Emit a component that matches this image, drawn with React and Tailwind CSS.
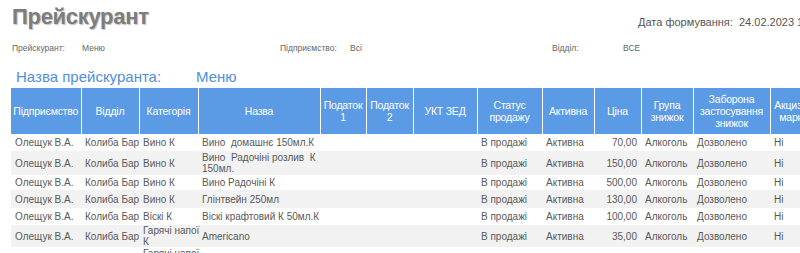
import React from 'react';

const columns = [
  { title: 'Підприємство', width: 70 },
  { title: 'Відділ', width: 58 },
  { title: 'Категорія', width: 59 },
  { title: 'Назва', width: 122 },
  { title: 'Податок\n1', width: 46 },
  { title: 'Податок\n2', width: 47 },
  { title: 'УКТ ЗЕД', width: 64 },
  { title: 'Статус\nпродажу', width: 65 },
  { title: 'Активна', width: 52 },
  { title: 'Ціна', width: 47 },
  { title: 'Група\nзнижок', width: 52 },
  { title: 'Заборона\nзастосування\nзнижок', width: 77 },
  { title: 'Акцизна\nмарка', width: 47 },
];

const rows = [
  { h: 'h-[17px]', name: 'Вино  домашнє 150мл.К', cat: 'Вино К', price: '70,00' },
  { h: 'h-[24px]', name: 'Вино  Радочіні розлив  К\n150мл.', cat: 'Вино К', price: '150,00' },
  { h: 'h-[15px]', name: 'Вино Радочіні К', cat: 'Вино К', price: '500,00' },
  { h: 'h-[18px]', name: 'Глінтвейн 250мл', cat: 'Вино К', price: '130,00' },
  { h: 'h-[17px]', name: 'Віскі крафтовий К 50мл.К', cat: 'Віскі К', price: '100,00' },
  { h: 'h-[21px]', name: 'Americano', cat: 'Гарячі напої\nК', price: '35,00' },
  { h: 'h-[34px]', name: 'Espresso', cat: 'Гарячі напої\nК', price: '35,00', catTop: true },
];

const Cell = ({ children, className = 'align-middle' }) => (
  <td className={`px-[4px] py-0 whitespace-pre leading-[11px] ${className}`}>
    {children}
  </td>
);

const App = () => {
  return (
    <div className="h-[253px] w-[800px] overflow-hidden bg-white font-['Liberation_Sans',Arial,sans-serif]">
      {/* title + date */}
      <div className="flex items-start pl-3 pt-[4px]">
        <h1 className="w-[626px] shrink-0 text-[22px] font-bold leading-[26px] tracking-[-0.3px] text-[#7d7d7d] [text-shadow:1px_1px_1px_rgba(0,0,0,0.25)]">
          Прейскурант
        </h1>
        <div className="mt-[12px] shrink-0 whitespace-pre text-[11px] leading-[13px] text-[#555]">
          Дата формування:  24.02.2023 16:42
        </div>
      </div>

      {/* filters */}
      <div className="mt-[12px] flex pl-3 text-[8.5px] leading-[12px] text-[#666]">
        <span className="w-[70px]">Прейскурант:</span>
        <span className="w-[198px]">Меню</span>
        <span className="w-[70px]">Підприємство:</span>
        <span className="w-[202px]">Всі</span>
        <span className="w-[71px]">Відділ:</span>
        <span>ВСЕ</span>
      </div>

      <div className="mt-[14px] flex pl-4 text-[15px] leading-[18px] text-[#4f8fdc]">
        <span className="w-[180px]">Назва прейскуранта:</span>
        <span>Меню</span>
      </div>

      <div className="mt-[2px] ml-[11px]">
        <table className="table-fixed border-collapse w-[806px]">
          <colgroup>
            {columns.map((c) => (
              <col key={c.title} style={{ width: c.width }} />
            ))}
          </colgroup>
          <thead>
            <tr className="h-[46px] bg-[#5b9be6]">
              {columns.map((c) => (
                <th
                  key={c.title}
                  className="border-r border-white p-0 align-middle text-center whitespace-pre text-[10.5px] font-normal leading-[12px] tracking-[-0.2px] text-white"
                >
                  {c.title}
                </th>
              ))}
            </tr>
          </thead>
          <tbody className="text-[10px] text-[#595959]">
            {rows.map((r, i) => (
              <tr key={i} className={`${r.h} ${i % 2 === 1 ? 'bg-[#f2f2f2]' : 'bg-white'}`}>
                <Cell>Олещук В.А.</Cell>
                <Cell>Колиба Бар</Cell>
                <Cell className={r.catTop ? 'align-top pt-[1px]' : 'align-middle'}>{r.cat}</Cell>
                <Cell>{r.name}</Cell>
                <Cell />
                <Cell />
                <Cell />
                <Cell>В продажі</Cell>
                <Cell className="align-middle px-[3px]">Активна</Cell>
                <Cell className="align-middle text-right">{r.price}</Cell>
                <Cell>Алкоголь</Cell>
                <Cell>Дозволено</Cell>
                <Cell>Ні</Cell>
              </tr>
            ))}
          </tbody>
        </table>
      </div>
    </div>
  );
};

export default App;
